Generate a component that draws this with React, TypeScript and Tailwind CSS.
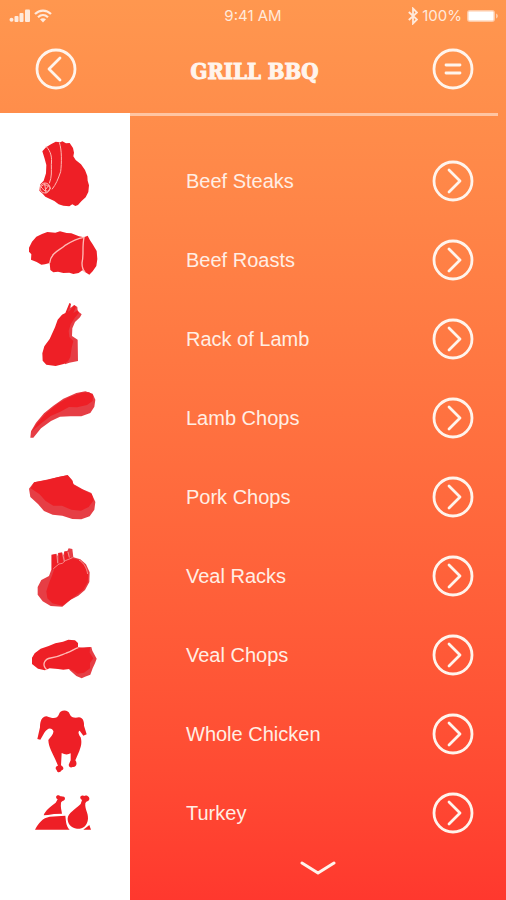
import type { ReactNode } from "react";

const RED = "#ee1f26";
const SHADE = "#e63e45";

type Cut = {
  name: string;
  viewBox: string;
  art: ReactNode;
};

const cuts: Cut[] = [
  {
    name: "Beef Steaks",
    viewBox: "-30 36 390 237",
    art: (
      <>
        <path
          fill={RED}
          d="M97 64L108 52L124 42L137 35L151 37L157 34L168 40L179 39L189 54L192 68L190 79L197 90L213 103L225 120L232 138L233 152L237 166L235 186L227 202L214 214L204 225L196 228L187 223L178 229L160 227L146 223L133 213L120 207L106 200L98 191L88 182L91 163L101 152L108 130L109 105L104 86Z"
        />
        <g fill="none" stroke="#ffb9b4" strokeWidth="3">
          <path d="M108 49C124 66 126 82 124 104C124 124 126 140 118 160" />
          <path d="M148 37C156 60 155 100 152 125C144 148 138 163 126 178" />
          <circle cx="105" cy="174" r="15" />
          <path d="M92 170L101 164L113 166L122 174L113 184L102 181L97 175ZM104 160L108 190M116 166L108 177" />
        </g>
      </>
    ),
  },
  {
    name: "Beef Roasts",
    viewBox: "-30 273 390 237",
    art: (
      <>
        <path
          fill={RED}
          d="M57 353L66 335L79 320L96 312L112 306L136 308L150 304L170 309L184 310L207 319L222 322L233 317L240 331L248 343L260 363L262 387L259 408L248 424L238 434L225 426L217 421L206 429L190 432L178 428L160 429L144 425L130 427L121 420L119 399L105 403L94 404L80 396L63 389L64 373L57 365Z"
        />
        <path
          fill="none"
          stroke="#ffb9b4"
          strokeWidth="4"
          d="M119 399C123 367 149 361 164 347C184 334 197 326 222 322C216 351 222 374 216 399C216 410 218 419 225 426"
        />
      </>
    ),
  },
  {
    name: "Rack of Lamb",
    viewBox: "-30 30 390 237",
    art: (
      <>
        <path
          fill={SHADE}
          d="M178 40L183 41L181 54L193 45L202 51L203 63L215 73L210 82L195 96L187 115L186 138L203 149L204 213L178 218L165 223L150 202Z"
        />
        <path
          fill={RED}
          d="M178 40L182 42L174 66L181 61L192 46L198 50L190 69L203 61L207 68L194 84L182 103L176 123L178 141L190 153L185 173L181 201L174 214L161 222L137 228L109 224L98 212L97 190L103 169L119 147L135 112L143 89L156 74L166 69Z"
        />
      </>
    ),
  },
  {
    name: "Lamb Chops",
    viewBox: "-30 267 390 237",
    art: (
      <>
        <path
          fill={SHADE}
          d="M61 443L63 424L78 398L102 370L130 347L160 326L199 309L226 304L248 311L256 329L253 350L241 369L214 379L181 379L150 380L123 393L93 415L70 443Z"
        />
        <path
          fill={RED}
          d="M65 424L82 399L109 369L143 341L177 322L213 308L237 307L249 315L248 333L231 345L201 352L177 351L151 365L122 378L94 400Z"
        />
      </>
    ),
  },
  {
    name: "Pork Chops",
    viewBox: "-30 -6 390 237",
    art: (
      <>
        <path
          fill={SHADE}
          d="M57 86L72 67L109 59L142 52L173 45L187 61L190 72L218 88L244 99L256 126L253 149L239 169L214 178L187 177L157 167L128 164L102 153L84 132L61 111Z"
        />
        <path
          fill={RED}
          d="M62 85L73 67L112 60L145 51L173 46L187 63L191 74L218 89L245 102L251 121L236 141L213 152L184 149L156 137L130 137L107 123L88 102Z"
        />
      </>
    ),
  },
  {
    name: "Veal Racks",
    viewBox: "-30 231 390 237",
    art: (
      <>
        <path
          fill={SHADE}
          d="M124 284L139 281L143 289L144 279L156 277L160 286L163 274L172 273L176 265L187 267L190 292L211 298L228 313L239 337L238 366L225 390L205 407L182 419L157 440L122 438L98 424L83 404L83 381L94 360L117 348L124 329Z"
        />
        <path
          fill={RED}
          d="M126 285L138 283L142 312L147 311L147 280L155 279L160 306L166 304L163 276L171 275L177 291L185 294L207 300L225 316L235 341L233 367L220 389L200 405L180 420L157 437L127 430L112 415L109 394L117 369L126 347L134 323L126 332Z"
        />
        <path
          fill="none"
          stroke="#ffb9b4"
          strokeWidth="2"
          d="M130 326L147 312L157 310L166 302L188 293M207 300C222 309 230 324 233 342M141 284L143 309M158 281L163 303M174 276L178 293"
        />
      </>
    ),
  },
  {
    name: "Veal Chops",
    viewBox: "-30 -12 390 237",
    art: (
      <>
        <path
          fill={SHADE}
          d="M190 86L225 82L244 81L247 92L260 116L255 130L248 145L241 164L225 170L215 175L199 168L188 158L178 149L180 110Z"
        />
        <path
          fill={RED}
          d="M66 113L74 100L92 86L116 78L136 70L159 65L175 59L195 61L204 69L204 82L225 84L240 82L239 98L250 115L240 129L240 145L222 158L203 161L190 152L178 147L160 149L144 147L119 145L105 151L84 146L66 132Z"
        />
        <path
          fill="none"
          stroke="#ffb9b4"
          strokeWidth="4"
          d="M110 149C94 133 104 117 122 114C148 111 153 105 169 99C184 95 194 86 205 83"
        />
      </>
    ),
  },
  {
    name: "Whole Chicken",
    viewBox: "-30 -15 390 237",
    art: (
      <path
        fill={RED}
        d="M147 43C149 28 176 27 179 42C183 54 196 54 207 52C219 52 223 66 222 77L230 103L220 107L209 92C204 94 204 102 212 112C217 129 212 141 208 153L196 181C204 191 197 203 188 201C181 205 174 199 177 192L182 181L182 160C173 165 164 164 155 159L153 196C161 201 163 208 155 211C151 219 141 219 140 210C134 205 138 198 144 197L135 176C127 158 116 142 115 120C121 111 132 102 130 93C122 79 111 87 103 98L91 119L82 117L90 82C90 64 95 49 110 49C128 56 141 58 147 43Z"
      />
    ),
  },
  {
    name: "Turkey",
    viewBox: "-30 222 390 237",
    art: (
      <g fill={RED}>
        <path d="M101 346C106 331 121 321 137 308L143 298C133 291 141 282 149 287C155 291 165 286 165 296C164 303 156 301 153 308C151 322 155 330 156 341L132 342L114 345Z" />
        <path d="M75 389C86 368 98 354 119 350L166 347C168 360 167 377 179 389Z" />
        <path d="M216 300C206 295 212 283 222 288C229 283 240 290 238 298C235 306 230 302 226 310C224 328 235 338 234 356C232 378 218 387 201 386C183 385 172 371 173 355C175 338 195 329 212 312Z" />
        <path d="M220 389L238 375L243 389Z" />
      </g>
    ),
  },
];

const Ring = ({ children }: { children: ReactNode }) => (
  <svg
    viewBox="-21 -21 42 42"
    className="size-[42px]"
    fill="none"
    stroke="#fff4ec"
    strokeWidth="2.8"
    strokeLinecap="round"
    strokeLinejoin="round"
    aria-hidden="true"
  >
    <circle r="19" />
    {children}
  </svg>
);

const StatusBar = () => (
  <div className="grid grid-cols-3 items-center px-2 pt-1 text-[#ffe9db]">
    <div className="flex items-center gap-1">
      <svg viewBox="0 0 22 14" className="h-[14px] w-[22px]" fill="currentColor" aria-hidden="true">
        <circle cx="3.5" cy="10.8" r="2" />
        <rect x="6.5" y="7" width="4" height="6" rx="1" />
        <rect x="11.5" y="4" width="4" height="9" rx="1" />
        <rect x="17" y="0.5" width="5" height="12.5" rx="1" />
      </svg>
      <svg
        viewBox="0 0 18 14"
        className="h-[14px] w-[18px]"
        fill="none"
        stroke="currentColor"
        strokeWidth="2.2"
        aria-hidden="true"
      >
        <path d="M1 5C5.5 0.4 12.5 0.4 17 5M4 8.2C7 5.4 11 5.4 14 8.2" />
        <path d="M9 13.5L6 10.2C7.8 8.8 10.2 8.8 12 10.2Z" fill="currentColor" stroke="none" />
      </svg>
    </div>
    <p className="text-center text-[15px] leading-6">9:41 AM</p>
    <div className="flex items-center justify-end gap-1">
      <svg
        viewBox="0 0 10 18"
        className="h-[18px] w-[10px]"
        fill="none"
        stroke="currentColor"
        strokeWidth="1.8"
        aria-hidden="true"
      >
        <path d="M0.8 5L9 12.5L5 16.5V1.5L9 5.5L0.8 13" />
      </svg>
      <p className="text-[15px] leading-6">100%</p>
      <svg viewBox="0 0 32 14" className="h-[14px] w-[32px]" aria-hidden="true">
        <rect x="1" y="1" width="28" height="12" rx="3" fill="#ffc9a5" />
        <rect x="2.5" y="2.5" width="25" height="9" rx="1" fill="#ffffff" />
        <path d="M30 4.5C32.5 5.5 32.5 8.5 30 9.5Z" fill="#ffc9a5" />
      </svg>
    </div>
  </div>
);

const App = () => {
  return (
    <div className="flex min-h-screen flex-col bg-linear-to-b from-[#ff974f] to-[#ff382e] font-['Liberation_Sans',Arial,sans-serif]">
      <header className="font-['Inter',sans-serif]">
        <StatusBar />
        <div className="flex h-[85px] items-center justify-between pr-8 pl-[35px] pb-1">
          <button type="button" aria-label="Back">
            <Ring>
              <path d="M4 -11L-7 0L4 11" />
            </Ring>
          </button>
          <h1 className="pt-1 font-['DejaVu_Serif_Condensed','DejaVu_Serif',serif] text-[22px] leading-8 font-bold text-[#fff4ec] [-webkit-text-stroke:1px_#fff4ec]">
            GRILL BBQ
          </h1>
          <button type="button" aria-label="Menu">
            <Ring>
              <path d="M-7 -4H7M-7 4H7" />
            </Ring>
          </button>
        </div>
      </header>

      <main className="flex grow">
        <div className="w-[130px] shrink-0 bg-white pt-[29px]">
          {cuts.map((cut) => (
            <svg
              key={cut.name}
              viewBox={cut.viewBox}
              className="h-[79px] w-full overflow-visible"
              aria-hidden="true"
            >
              {cut.art}
            </svg>
          ))}
        </div>
        <div className="grow">
          <div className="mr-2 h-[3px] bg-[#ffc5a3]" />
          <ul className="pt-[25px]">
            {cuts.map((cut) => (
              <li key={cut.name}>
                <button
                  type="button"
                  className="flex h-[79px] w-full items-center justify-between pr-8 pl-14 text-left text-[20px] leading-6 text-[#ffeee4]"
                >
                  {cut.name}
                  <Ring>
                    <path d="M-4 -11L7 0L-4 11" />
                  </Ring>
                </button>
              </li>
            ))}
          </ul>
          <button type="button" aria-label="More" className="mx-auto flex h-8 items-center">
            <svg
              viewBox="0 0 36 14"
              className="h-[14px] w-[36px]"
              fill="none"
              stroke="#fff4ec"
              strokeWidth="3"
              strokeLinecap="round"
              strokeLinejoin="round"
              aria-hidden="true"
            >
              <path d="M2 2L18 12L34 2" />
            </svg>
          </button>
        </div>
      </main>
    </div>
  );
};

export default App;
